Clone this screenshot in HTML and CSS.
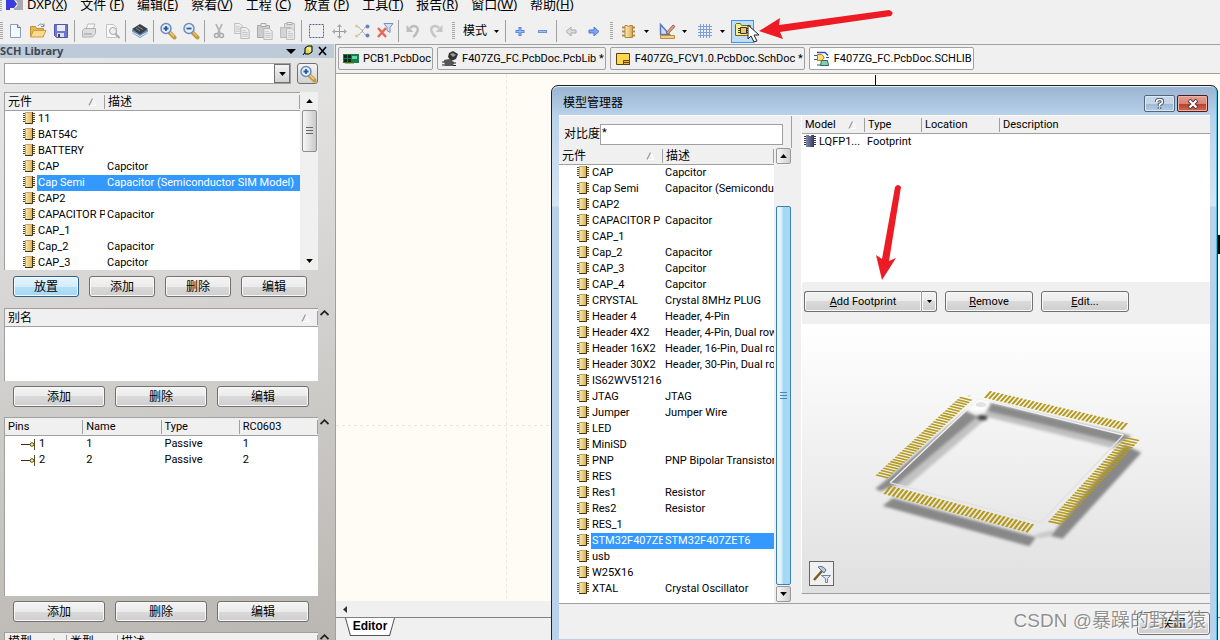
FILE: index.html
```html
<!DOCTYPE html>
<html lang="zh-CN">
<head>
    <meta charset="UTF-8">
    <meta name="viewport" content="width=device-width, initial-scale=1.0">
    <title>SCH Library</title>
    <link rel="stylesheet" href="styles.css">
</head>
<body>
    <!-- Shared icons -->
    <svg class="defs" width="0" height="0">
        <defs>
            <linearGradient id="gold" x1="0" x2="1"><stop offset="0" stop-color="#fdeeb4"/><stop offset="1" stop-color="#d9a84a"/></linearGradient>
            <linearGradient id="navy" x1="0" x2="1"><stop offset="0" stop-color="#8288ae"/><stop offset="1" stop-color="#353a5c"/></linearGradient>
        </defs>
        <symbol id="chip" viewBox="0 0 12 14">
            <path d="M0 2.500h12M0 4.500h12M0 6.500h12M0 8.500h12M0 10.500h12" stroke="#5a4a22"/>
            <rect x="2" y="1" width="8" height="12" fill="url(#gold)"/>
            <path d="M2.500 13V1.500h7" fill="none" stroke="#c8a866"/>
            <path d="M2 12.500h7.500V1" fill="none" stroke="#463412"/>
        </symbol>
        <symbol id="chip-blue" viewBox="0 0 12 14">
            <path d="M0 2.500h12M0 4.500h12M0 6.500h12M0 8.500h12M0 10.500h12" stroke="#2c3148"/>
            <rect x="2" y="1" width="8" height="12" fill="url(#navy)"/>
            <path d="M5 1h2v1H5z" fill="#fff"/>
        </symbol>
        <symbol id="sort" viewBox="0 0 9 8">
            <path d="M4.500 .5L8 7.500H1" stroke="#fff" fill="none"/>
            <path d="M1 7.500L4.500 .5" stroke="#999" fill="none" stroke-width="1.200"/>
        </symbol>
        <symbol id="caret" viewBox="0 0 9 6">
            <path d="M.5 5L4.500 1.200L8.500 5" stroke="#222" stroke-width="1.800" fill="none"/>
        </symbol>
        <symbol id="pin" viewBox="0 0 14 12">
            <path d="M0 6.500h9" stroke="#3c2c18"/><path d="M13.500 1v11" stroke="#5a4a30"/>
            <circle cx="11" cy="6.500" r="1.800" fill="#f6ee84" stroke="#5c4a10"/>
        </symbol>
        <symbol id="down" viewBox="0 0 5 3"><path d="M0 0h5L2.500 3z" fill="#000"/></symbol>
        <symbol id="zoom-in" viewBox="0 0 18 18">
            <path d="M10.500 10.500l5 5" stroke="#c99a3c" stroke-width="4" stroke-linecap="round"/>
            <path d="M10.500 9.800l4.500 4.500" stroke="#f5dc8c" stroke-width="1.200"/>
            <circle cx="7" cy="6.500" r="5" fill="#e3f0fc" stroke="#6d8cb8" stroke-width="1.500"/>
            <path d="M4.500 6.500h5M7 4v5" stroke="#2857a8" stroke-width="1.800"/>
        </symbol>
        <symbol id="page" viewBox="0 0 10 13">
            <path d="M.5.5h6l3 3v9h-9z" fill="#eee" stroke="#b4b4b4"/><path d="M2 4h4M2 6h6M2 8h6M2 10h6" stroke="#c4c4c4"/>
        </symbol>
    </svg>

    <div class="app">
        <nav class="menubar">
            <span class="grip"></span>
            <svg class="logo" width="17" height="14" viewBox="0 0 17 14"><path d="M0 0h8l3 4-3 4H4v2H0z" fill="#3c3cdc"/><path d="M9 0h8v10H8V8c4 0 5-6 1-8z" fill="#a8a8b0"/></svg>
            <a href="#">DXP(<u>X</u>)</a>
            <a href="#">文件 (<u>F</u>)</a>
            <a href="#">编辑(<u>E</u>)</a>
            <a href="#">察看(<u>V</u>)</a>
            <a href="#">工程 (<u>C</u>)</a>
            <a href="#">放置 (<u>P</u>)</a>
            <a href="#">工具(<u>T</u>)</a>
            <a href="#">报告(<u>R</u>)</a>
            <a href="#">窗口(<u>W</u>)</a>
            <a href="#">帮助(<u>H</u>)</a>
        </nav>

        <div class="toolbar">
            <span class="grip"></span>
            <button class="tool" aria-label="New"><svg width="18" height="18" viewBox="0 0 18 18"><path d="M4.500 2.500h7l3 3v10h-10z" fill="#f4f8ff" stroke="#8c9cbc"/><path d="M11.500 2.500v3h3" fill="#cddcf4" stroke="#6478a4"/></svg></button>
            <button class="tool" aria-label="Open"><svg width="18" height="18" viewBox="0 0 18 18"><path d="M1.500 14.500v-10h5l1 2h7v8z" fill="#e9b84c" stroke="#c0903c"/><path d="M1.500 15l3-6.500h12.500l-3 6.500z" fill="#fbdc8c" stroke="#c89a44"/><path d="M9 4c2-3 5-2 6 0m0-2.500v3h-3" fill="none" stroke="#7488ac"/></svg></button>
            <button class="tool" aria-label="Save"><svg width="18" height="18" viewBox="0 0 18 18"><path d="M2.500 2.500h13v13h-11l-2-2z" fill="#7078cc" stroke="#5058a8"/><path d="M5 3h8v6H5z" fill="#e8ecfa"/><path d="M5 11h7v4H5z" fill="#dde"/><path d="M6 12h2v3H6z" fill="#445"/></svg></button>
            <span class="sep"></span>
            <button class="tool" aria-label="Print"><svg width="18" height="18" viewBox="0 0 18 18"><path d="M6 7l2-5h7l-2 5z" fill="#f6f6f6" stroke="#bbb"/><path d="M2.500 8.500l2-2h11v5l-3 3.500h-10z" fill="#ddd" stroke="#b0b0b0"/><path d="M4 12h8" stroke="#999"/></svg></button>
            <button class="tool" aria-label="Preview"><svg width="18" height="18" viewBox="0 0 18 18"><path d="M3.500 2.500h7l3 3v10h-10z" fill="#f8f8f8" stroke="#c4c4c4"/><circle cx="10" cy="9" r="3.500" fill="#eee" stroke="#aaa"/><path d="M12.500 12l4 4" stroke="#aaa" stroke-width="2"/></svg></button>
            <span class="sep"></span>
            <button class="tool" aria-label="Layers"><svg width="18" height="18" viewBox="0 0 18 18"><path d="M1 11l8 5 8-5V8H1z" fill="#6f93b8"/><path d="M1 10l8 4.500 8-4.500" stroke="#e6f0fa" fill="none"/><path d="M1 7l8-5 8 5-8 5.500z" fill="#3c4148"/><path d="M5 6l4 3M7 4.500l5 3" stroke="#8a929c"/></svg></button>
            <span class="sep"></span>
            <button class="tool" aria-label="Zoom in"><svg width="18" height="18"><use href="#zoom-in"/></svg></button>
            <button class="tool" aria-label="Zoom out"><svg width="18" height="18" viewBox="0 0 18 18"><path d="M10.500 10.500l5 5" stroke="#c99a3c" stroke-width="4" stroke-linecap="round"/><path d="M10.500 9.800l4.500 4.500" stroke="#f5dc8c"/><circle cx="7" cy="6.500" r="5" fill="#e3f0fc" stroke="#6d8cb8" stroke-width="1.500"/><path d="M4.500 6.500h5" stroke="#2857a8" stroke-width="1.800"/></svg></button>
            <span class="sep"></span>
            <button class="tool" aria-label="Cut"><svg width="18" height="18" viewBox="0 0 18 18"><path d="M6 2l4.500 10M12 2L7.500 12" stroke="#b4b4b4" stroke-width="1.800"/><circle cx="6.500" cy="13.500" r="2" fill="none" stroke="#aaa" stroke-width="1.500"/><circle cx="11.500" cy="13.500" r="2" fill="none" stroke="#aaa" stroke-width="1.500"/></svg></button>
            <button class="tool" aria-label="Copy"><svg width="18" height="18"><use href="#page" x="1" y="1" width="9" height="11"/><use href="#page" x="7" y="5" width="10" height="12"/></svg></button>
            <button class="tool" aria-label="Paste"><svg width="18" height="18"><path d="M1.500 3.500h12v12h-12z" fill="#ccc" stroke="#aaa"/><path d="M5 1.500h5v3H5z" fill="#eee" stroke="#aaa"/><use href="#page" x="7" y="6" width="10" height="12"/></svg></button>
            <button class="tool" aria-label="Paste array"><svg width="18" height="18"><path d="M5.500 1.500h10v11h-10z" fill="#ddd" stroke="#bbb"/><path d="M1.500 5.500h10v10h-10z" fill="#d4d4d4" stroke="#bbb"/><path d="M8 .5h5v2H8z" fill="#eee" stroke="#aaa"/><use href="#page" x="7" y="6" width="9" height="12"/></svg></button>
            <span class="sep"></span>
            <button class="tool" aria-label="Select area"><svg width="18" height="18"><path d="M2.500 2.500h14v13h-14z" fill="none" stroke="#50649a" stroke-dasharray="2 1"/></svg></button>
            <button class="tool" aria-label="Move"><svg width="18" height="18"><path d="M9.500 3v12M3 9.500h13" stroke="#999" /><path d="M7 5l2.500-3L12 5zM7 14l2.500 3 2.500-3zM5 7L2 9.500 5 12zM14 7l3 2.500-3 2.500z" fill="#aaa"/></svg></button>
            <button class="tool" aria-label="Deselect"><svg width="18" height="18"><path d="M5 5c3 0 5 8 9 8M5 13c3 0 5-8 9-8" stroke="#999" fill="none" stroke-dasharray="2 1"/><circle cx="3.500" cy="4" r="1.500" fill="#e0d060"/><circle cx="3.500" cy="14" r="1.500" fill="#e0d060"/><circle cx="14.500" cy="4.500" r="2" fill="#6884b8"/><circle cx="14.500" cy="13.500" r="2" fill="#6884b8"/></svg></button>
            <button class="tool" aria-label="Clear filter"><svg width="18" height="18"><path d="M8 1.500h9l-3 4v5l-3-2V5.500z" fill="#cfe0f2" stroke="#7890b4"/><path d="M2 6l8 9M10 6l-8 9" stroke="#e86858" stroke-width="2.500"/></svg></button>
            <span class="sep"></span>
            <button class="tool" aria-label="Undo"><svg width="18" height="18"><path d="M6 6c4-4 10-1 7 4q-1 3-4 5" stroke="#bdbdbd" stroke-width="2.500" fill="none"/><path d="M2.500 3v7h7z" fill="#bdbdbd"/></svg></button>
            <button class="tool" aria-label="Redo"><svg width="18" height="18"><path d="M12 6c-4-4-10-1-7 4q1 3 4 5" stroke="#c6c6c6" stroke-width="2.500" fill="none"/><path d="M15.500 3v7h-7z" fill="#c6c6c6"/></svg></button>
            <span class="grip mid"></span>
            <button class="mode">模式<svg width="5" height="3"><use href="#down"/></svg></button>
            <span class="sep"></span>
            <button class="tool" aria-label="Add"><svg width="18" height="18"><path d="M9 5v9M4.500 9.500h9" stroke="#5a84dc" stroke-width="3"/><path d="M9 6v7M5.500 9.500h7" stroke="#9cbcf8"/></svg></button>
            <button class="tool" aria-label="Subtract"><svg width="18" height="18"><path d="M4 9.500h9" stroke="#6c90e0" stroke-width="3"/><path d="M5 9.500h7" stroke="#a4c0f8"/></svg></button>
            <span class="sep"></span>
            <button class="tool" aria-label="Previous"><svg width="18" height="18"><path d="M4 9.500l5-4.500v3h5v3H9v3z" fill="#ddd" stroke="#aaa"/></svg></button>
            <button class="tool" aria-label="Next"><svg width="18" height="18"><path d="M14 9.500L9 5v3H4v3h5v3z" fill="#7ca4f4" stroke="#5478d0"/></svg></button>
            <span class="grip mid"></span>
            <button class="tool" aria-label="Part"><svg width="18" height="18"><path d="M2 5.500h13M2 9.500h13M2 13.500h13" stroke="#b08c50" stroke-width="2"/><path d="M5 3.500h2q1.500 2 3 0h2.500v12H5z" fill="url(#gold)" stroke="#b08440"/></svg></button>
            <button class="drop" aria-label="Part options"><svg width="5" height="3"><use href="#down"/></svg></button>
            <button class="tool" aria-label="Drawing tools"><svg width="18" height="18"><path d="M2.500 2.500v10h9z" fill="#cfe0fa" stroke="#5878c0" stroke-width="1.500"/><path d="M8 11l7-8 2 1.500L10 12z" fill="#d8a090" stroke="#a06050"/><path d="M2.500 13.500h14v3h-14z" fill="#f2cf78" stroke="#b8903c"/></svg></button>
            <button class="drop" aria-label="Drawing options"><svg width="5" height="3"><use href="#down"/></svg></button>
            <button class="tool" aria-label="Grid"><svg width="18" height="18"><path d="M2 4.500h14M2 7.500h14M2 10.500h14M2 13.500h14M4.500 2v14M7.500 2v14M10.500 2v14M13.500 2v14" stroke="#7e9ed8"/></svg></button>
            <button class="drop" aria-label="Grid options"><svg width="5" height="3"><use href="#down"/></svg></button>
            <button class="tool active" aria-label="Model manager"><svg width="18" height="18"><path d="M1.500 13.500v-11l1-1h4l1 2h9v10z" fill="#f6f088" stroke="#6c6820"/><path d="M4 6.500h11M4 8.500h11M4 10.500h11" stroke="#333"/><path d="M6.500 5.500h6v6h-6z" fill="#e6c47c" stroke="#432"/></svg></button>
        </div>

        <div class="workspace">
            <aside class="panel">
                <div class="panel-title">
                    <h2>SCH Library</h2>
                    <svg width="42" height="12" viewBox="0 0 42 12"><path d="M0 4h10L5 9z" fill="#000"/><path d="M17 10l3-4" stroke="#000"/><path d="M19 3l3-2h4v6l-3 2h-4z" fill="#e4d850" stroke="#000"/><path d="M21 3h3v3" stroke="#fff" fill="none"/><path d="M33 2l7 8M40 2l-7 8" stroke="#000" stroke-width="1.600"/></svg>
                </div>
                <div class="panel-body">
                    <div class="search">
                        <div class="combo">
                            <input type="text" aria-label="Component filter">
                            <button aria-label="Open list"><svg width="7" height="4"><use href="#down"/></svg></button>
                        </div>
                        <button class="find" aria-label="Find"><svg width="18" height="18"><use href="#zoom-in"/></svg></button>
                    </div>

                    <div class="section">
                        <div class="list parts">
                            <div class="rows">
                                <table>
                                    <colgroup><col class="col-name"><col></colgroup>
                                    <thead><tr><th>元件<svg class="sort"><use href="#sort"/></svg></th><th>描述</th></tr></thead>
                                    <tbody>
                                        <tr><td><svg class="chip"><use href="#chip"/></svg>11</td><td></td></tr>
                                        <tr><td><svg class="chip"><use href="#chip"/></svg>BAT54C</td><td></td></tr>
                                        <tr><td><svg class="chip"><use href="#chip"/></svg>BATTERY</td><td></td></tr>
                                        <tr><td><svg class="chip"><use href="#chip"/></svg>CAP</td><td>Capcitor</td></tr>
                                        <tr class="selected"><td><svg class="chip"><use href="#chip"/></svg>Cap Semi</td><td>Capacitor (Semiconductor SIM Model)</td></tr>
                                        <tr><td><svg class="chip"><use href="#chip"/></svg>CAP2</td><td></td></tr>
                                        <tr><td><svg class="chip"><use href="#chip"/></svg>CAPACITOR P</td><td>Capacitor</td></tr>
                                        <tr><td><svg class="chip"><use href="#chip"/></svg>CAP_1</td><td></td></tr>
                                        <tr><td><svg class="chip"><use href="#chip"/></svg>Cap_2</td><td>Capacitor</td></tr>
                                        <tr><td><svg class="chip"><use href="#chip"/></svg>CAP_3</td><td>Capcitor</td></tr>
                                    </tbody>
                                </table>
                            </div>
                            <div class="scroll">
                                <button aria-label="Up"><svg class="flip" width="7" height="4"><use href="#down"/></svg></button>
                                <div class="thumb"></div>
                                <button class="end" aria-label="Down"><svg width="7" height="4"><use href="#down"/></svg></button>
                            </div>
                        </div>
                        <div class="side"></div>
                    </div>
                    <div class="actions four">
                        <button class="btn primary">放置</button>
                        <button class="btn">添加</button>
                        <button class="btn">删除</button>
                        <button class="btn">编辑</button>
                    </div>

                    <div class="section">
                        <div class="list alias">
                            <div class="rows">
                                <table><thead><tr><th>别名<svg class="sort"><use href="#sort"/></svg></th></tr></thead></table>
                            </div>
                        </div>
                        <div class="side"><svg width="9" height="6"><use href="#caret"/></svg></div>
                    </div>
                    <div class="actions">
                        <button class="btn">添加</button>
                        <button class="btn">删除</button>
                        <button class="btn">编辑</button>
                    </div>

                    <div class="section">
                        <div class="list pins">
                            <div class="rows">
                                <table>
                                    <thead><tr><th>Pins</th><th>Name</th><th>Type</th><th>RC0603</th></tr></thead>
                                    <tbody>
                                        <tr><td><svg class="pin"><use href="#pin"/></svg>1</td><td>1</td><td>Passive</td><td>1</td></tr>
                                        <tr><td><svg class="pin"><use href="#pin"/></svg>2</td><td>2</td><td>Passive</td><td>2</td></tr>
                                    </tbody>
                                </table>
                            </div>
                        </div>
                        <div class="side"><svg width="9" height="6"><use href="#caret"/></svg></div>
                    </div>
                    <div class="actions last">
                        <button class="btn">添加</button>
                        <button class="btn">删除</button>
                        <button class="btn">编辑</button>
                    </div>

                    <div class="section">
                        <div class="list models">
                            <div class="rows">
                                <table>
                                    <colgroup><col class="col-model"><col class="col-kind"><col></colgroup>
                                    <thead><tr><th>模型<svg class="sort"><use href="#sort"/></svg></th><th>类型</th><th>描述</th></tr></thead>
                                </table>
                            </div>
                        </div>
                        <div class="side"><svg width="9" height="6"><use href="#caret"/></svg></div>
                    </div>
                </div>
            </aside>

            <main class="main">
                <div class="tabs">
                    <a href="#" class="tab"><svg width="16" height="16"><path d="M0 3h16v9H0z" fill="#1d7a4c"/><path d="M1 4h3v3H1zM5 4h3v3H5zM1 8h3v3H1zM5 8h3v3H5z" fill="#0b2c1c"/><path d="M9 5h5v3H9z" fill="#62d8a0"/><path d="M2 12.500h9" stroke="#d4b440"/></svg>PCB1.PcbDoc</a>
                    <a href="#" class="tab"><svg width="16" height="16"><path d="M7 2l4-2 5 3-2 5-5 2-3-4z" fill="#333"/><path d="M8 3l3-1 3 2-3 2z" fill="#999"/><path d="M2 9l5-1 5 3-1 4H3z" fill="#555"/><path d="M0 11h3M0 14h3M11 12h3M11 14.500h3" stroke="#222"/></svg>F407ZG_FC.PcbDoc.PcbLib *</a>
                    <a href="#" class="tab"><svg width="16" height="16"><path d="M1.500 2.500h13v11h-13z" fill="#fbd84c" stroke="#5c4210"/><path d="M8.500 9.500h6v4h-6zM8.500 11.500h6" fill="#f4b838" stroke="#5c4210"/></svg>F407ZG_FCV1.0.PcbDoc.SchDoc *</a>
                    <a href="#" class="tab current"><svg width="16" height="16"><path d="M3 1.500h8l3 3" stroke="#2c50b0" fill="none" stroke-width="1.500"/><path d="M0 4.500h3M0 8.500h3M12 6.500h3M3 14h12" stroke="#2c50b0"/><path d="M3.500 3.500h4q5 3 0 6h-4z" fill="#fce46c" stroke="#c86c20"/><path d="M6.500 14.500l1-5h6l1 5z" fill="#8cccb4" stroke="#2c6c60"/></svg>F407ZG_FC.PcbDoc.SCHLIB</a>
                </div>
                <div class="canvas"></div>
                <div class="hscroll"><svg width="4" height="7" viewBox="0 0 4 7"><path d="M4 0v7L0 3.500z" fill="#333"/></svg></div>
                <div class="footer">
                    <a href="#" class="view-tab">Editor</a>
                </div>
            </main>
        </div>

        <section class="dialog">
            <header class="titlebar">
                <h1>模型管理器</h1>
                <button class="win help" aria-label="Help"><svg width="11" height="12" viewBox="0 0 11 12"><path d="M2.500 4q0-2.500 3-2.500t3 2.200q0 1.600-3 2.800v1.500M5.500 9v2" stroke="#444c5c" stroke-width="3.400" fill="none"/><path d="M2.500 4q0-2.500 3-2.500t3 2.200q0 1.600-3 2.800v1.500M5.500 9.300v1.500" stroke="#fff" stroke-width="1.600" fill="none"/></svg></button>
                <button class="win close" aria-label="Close"><svg width="12" height="10" viewBox="0 0 12 10"><path d="M2 1l8 8M10 1L2 9" stroke="#4c3038" stroke-width="4"/><path d="M2.500 1.500l7 7M9.500 1.500l-7 7" stroke="#fff" stroke-width="2.200"/></svg></button>
            </header>
            <div class="dialog-body">
                <div class="columns">
                    <div class="library">
                        <div class="filter">
                            <label for="mask">对比度</label><input type="text" id="mask" value="*">
                        </div>
                        <div class="list all">
                            <div class="rows">
                                <table>
                                    <colgroup><col class="col-name"><col></colgroup>
                                    <thead><tr><th>元件<svg class="sort"><use href="#sort"/></svg></th><th>描述</th></tr></thead>
                                    <tbody>
                                        <tr><td><svg class="chip"><use href="#chip"/></svg>CAP</td><td>Capcitor</td></tr>
                                        <tr><td><svg class="chip"><use href="#chip"/></svg>Cap Semi</td><td>Capacitor (Semiconductor SIM Model)</td></tr>
                                        <tr><td><svg class="chip"><use href="#chip"/></svg>CAP2</td><td></td></tr>
                                        <tr><td><svg class="chip"><use href="#chip"/></svg>CAPACITOR P</td><td>Capacitor</td></tr>
                                        <tr><td><svg class="chip"><use href="#chip"/></svg>CAP_1</td><td></td></tr>
                                        <tr><td><svg class="chip"><use href="#chip"/></svg>Cap_2</td><td>Capacitor</td></tr>
                                        <tr><td><svg class="chip"><use href="#chip"/></svg>CAP_3</td><td>Capcitor</td></tr>
                                        <tr><td><svg class="chip"><use href="#chip"/></svg>CAP_4</td><td>Capcitor</td></tr>
                                        <tr><td><svg class="chip"><use href="#chip"/></svg>CRYSTAL</td><td>Crystal 8MHz PLUG</td></tr>
                                        <tr><td><svg class="chip"><use href="#chip"/></svg>Header 4</td><td>Header, 4-Pin</td></tr>
                                        <tr><td><svg class="chip"><use href="#chip"/></svg>Header 4X2</td><td>Header, 4-Pin, Dual row</td></tr>
                                        <tr><td><svg class="chip"><use href="#chip"/></svg>Header 16X2</td><td>Header, 16-Pin, Dual row</td></tr>
                                        <tr><td><svg class="chip"><use href="#chip"/></svg>Header 30X2</td><td>Header, 30-Pin, Dual row</td></tr>
                                        <tr><td><svg class="chip"><use href="#chip"/></svg>IS62WV51216</td><td></td></tr>
                                        <tr><td><svg class="chip"><use href="#chip"/></svg>JTAG</td><td>JTAG</td></tr>
                                        <tr><td><svg class="chip"><use href="#chip"/></svg>Jumper</td><td>Jumper Wire</td></tr>
                                        <tr><td><svg class="chip"><use href="#chip"/></svg>LED</td><td></td></tr>
                                        <tr><td><svg class="chip"><use href="#chip"/></svg>MiniSD</td><td></td></tr>
                                        <tr><td><svg class="chip"><use href="#chip"/></svg>PNP</td><td>PNP Bipolar Transistor</td></tr>
                                        <tr><td><svg class="chip"><use href="#chip"/></svg>RES</td><td></td></tr>
                                        <tr><td><svg class="chip"><use href="#chip"/></svg>Res1</td><td>Resistor</td></tr>
                                        <tr><td><svg class="chip"><use href="#chip"/></svg>Res2</td><td>Resistor</td></tr>
                                        <tr><td><svg class="chip"><use href="#chip"/></svg>RES_1</td><td></td></tr>
                                        <tr class="selected focus"><td><svg class="chip"><use href="#chip"/></svg>STM32F407ZET6</td><td>STM32F407ZET6</td></tr>
                                        <tr><td><svg class="chip"><use href="#chip"/></svg>usb</td><td></td></tr>
                                        <tr><td><svg class="chip"><use href="#chip"/></svg>W25X16</td><td></td></tr>
                                        <tr><td><svg class="chip"><use href="#chip"/></svg>XTAL</td><td>Crystal Oscillator</td></tr>
                                    </tbody>
                                </table>
                            </div>
                            <div class="scroll">
                                <button class="raised" aria-label="Up"><svg class="flip" width="7" height="4"><use href="#down"/></svg></button>
                                <div class="thumb hot"></div>
                                <button class="raised end" aria-label="Down"><svg width="7" height="4"><use href="#down"/></svg></button>
                            </div>
                        </div>
                    </div>

                    <div class="detail">
                        <div class="footprints">
                            <table>
                                <colgroup><col class="col-fp"><col class="col-type"><col class="col-loc"><col></colgroup>
                                <thead><tr><th>Model<svg class="sort"><use href="#sort"/></svg></th><th>Type</th><th>Location</th><th>Description</th></tr></thead>
                                <tbody><tr><td><svg class="chip"><use href="#chip-blue"/></svg>LQFP1...</td><td>Footprint</td><td></td><td></td></tr></tbody>
                            </table>
                        </div>
                        <div class="footprint-actions">
                            <div class="split">
                                <button class="btn"><span><u>A</u>dd Footprint</span></button>
                                <button class="btn more" aria-label="More"><svg width="5" height="3"><use href="#down"/></svg></button>
                            </div>
                            <button class="btn"><u>R</u>emove</button>
                            <button class="btn"><u>E</u>dit...</button>
                        </div>
                        <div class="preview">
                            <!-- 3D view of the package, 36 pads per side -->
                            <svg class="package" width="300" height="190" viewBox="0 0 900 570">
                                <defs><filter id="soft"><feGaussianBlur stdDeviation="5"/></filter></defs>
                                <g filter="url(#soft)">
                                    <path d="M345 135L385 140L140 350L80 345z" fill="#c2c2c2"/>
                                    <path d="M318 122L352 140L112 342L62 364L46 356L90 320z" fill="#8a8a8a"/>
                                    <path d="M385 112L790 205L765 236L370 138z" fill="#c0c0c0"/>
                                    <path d="M392 98L815 198L775 218L384 124z" fill="#8a8a8a"/>
                                    <path d="M795 225L844 248L608 506L572 498L650 400z" fill="#888"/>
                                    <path d="M98 384L528 502L508 529L68 408z" fill="#888"/>
                                    <path d="M520 495L580 480L572 498L540 505z" fill="#c8c8c8"/>
                                    <ellipse cx="367" cy="143" rx="16" ry="9" fill="#444"/>
                                    <path d="M345 92h45l-15 28h-45z" fill="#fff"/>
                                </g>
                                <ellipse cx="363" cy="104" rx="16" ry="8" fill="#e2e2e2"/>
                                <path d="M323 78h9" stroke="#ddd" stroke-width="5"/>
                                <path d="M90 338L355 86L790 195" fill="none" stroke="#f2f2f4" stroke-width="4"/>
                                <path d="M790 195L542 458L90 338" fill="none" stroke="#e2e2e4" stroke-width="4"/>
                                <g stroke="#b59a1c" stroke-dasharray="2.300 1.700">
                                    <path d="M0 .5H142.300" transform="matrix(2.910 .680 -18 20 390 63)"/>
                                    <path d="M0 .5H142.300" transform="matrix(-1.790 1.660 36 9 301 80)"/>
                                    <path d="M0 .5H142.300" transform="matrix(3.040 .815 -20 25 90 347)"/>
                                    <path d="M0 .5H142.300" transform="matrix(-1.640 1.790 42 9 797 201)"/>
                                </g>
                            </svg>
                            <button class="config" aria-label="View options"><svg width="20" height="20"><path d="M2 16L10 7" stroke="#7c5a28" stroke-width="2.500"/><path d="M6 3q5-2 8 3l-2 3-3-3z" fill="#b8cce0" stroke="#5c7088"/><path d="M9.500 11.500h9l-3 3v4h-2v-4z" fill="#dceaf8" stroke="#6c84a4"/></svg></button>
                        </div>
                    </div>
                </div>
                <div class="dialog-footer">
                    <button class="btn">关闭</button>
                </div>
            </div>
        </section>

        <!-- Annotations -->
        <svg class="pointer" width="13" height="19" viewBox="0 0 13 19"><path d="M1 1v14l3-3 3 6 3-1-3-6h5z" fill="#fff" stroke="#222"/></svg>
        <svg class="arrow arrow-top" width="136" height="32" viewBox="0 0 136 32"><path d="M1 22L22 9L21 16L131 1Q137 3 133 7L22 23L25 30z" fill="#ed1c24"/></svg>
        <svg class="arrow arrow-add" width="28" height="98" viewBox="0 0 28 98"><path d="M7 97L1 72L7 76L20 4Q23 0 26 4L14 78L21 75z" fill="#ed1c24"/></svg>
        <div class="watermark">CSDN @暴躁的野生猿</div>
    </div>
</body>
</html>
```

FILE: styles.css
```css
* {
    box-sizing: border-box;
}

body {
    margin: 0;
    font-family: Roboto, "Noto Sans CJK SC", sans-serif;
    font-size: 11px;
    line-height: 16px;
    color: #000;
}

h1,
h2 {
    margin: 0;
    font-size: 12px;
}

a {
    color: inherit;
    text-decoration: none;
}

button,
input {
    font: inherit;
    color: inherit;
    margin: 0;
    padding: 0;
}

svg {
    flex: none;
}

.defs {
    position: absolute;
}

.app {
    position: relative;
    display: flex;
    flex-direction: column;
    height: 100vh;
    overflow: hidden;
    background-color: #f0f0f0;
}

/* Menu and toolbar */
.menubar {
    display: flex;
    height: 18px;
    overflow: hidden;
    font-family: "Noto Sans", "Noto Sans CJK SC", sans-serif;
    font-size: 13px;
}

.menubar a {
    margin: -5px 13px 0 0;
    line-height: 18px;
    white-space: nowrap;
}

.menubar .logo {
    margin: 0 4px;
}

.grip {
    width: 3px;
    height: 18px;
    background: repeating-linear-gradient(#a8a8a8 0 1px, transparent 1px 2px);
}

.menubar .grip {
    width: 2px;
    height: 12px;
}

.toolbar {
    display: flex;
    align-items: center;
    height: 26px;
}

.grip.mid {
    margin: 0 4px 0 5px;
}

.tool,
.drop,
.mode {
    display: flex;
    align-items: center;
    justify-content: center;
    width: 23px;
    height: 23px;
    border: none;
    background: none;
}

.tool.active {
    border: 1px solid #3399ff;
    background-color: #c2dcf6;
}

.drop {
    width: 15px;
    padding-right: 3px;
}

.mode {
    width: 44px;
    gap: 7px;
    font-size: 12px;
}

.sep {
    width: 1px;
    height: 22px;
    margin: 0 2px;
    background-color: #a0a0a0;
}

.workspace {
    display: flex;
    flex: 1;
    min-height: 0;
}

/* Library panel */
.panel {
    display: flex;
    flex-direction: column;
    flex: none;
    width: 335px;
    overflow: hidden;
    background: linear-gradient(170deg, #eaeaea, #bab7b2);
}

.panel-title {
    display: flex;
    align-items: center;
    justify-content: space-between;
    height: 14px;
    margin-right: 1px;
    padding-right: 6px;
    background-color: #bdcad8;
    color: #3f4650;
}

.panel-title h2 {
    font-family: "Noto Sans", sans-serif;
    font-size: 11px;
    line-height: 14px;
}

.panel-body {
    padding: 5px 0 0 4px;
}

.search {
    display: flex;
    gap: 6px;
    margin: 0 17px 8px 0;
}

.combo {
    display: flex;
    flex: 1;
    height: 21px;
    border: 1px solid #a0a0a0;
    background-color: #fff;
}

.combo input {
    flex: 1;
    min-width: 0;
    border: none;
}

.combo button,
.find {
    display: flex;
    align-items: center;
    justify-content: center;
    width: 16px;
    border: 1px solid #707070;
    background: linear-gradient(#f4f4f4, #d2d2d2);
}

.find {
    width: 21px;
    border-radius: 3px;
}

.section {
    display: flex;
}

.side {
    width: 17px;
    padding-left: 2px;
    line-height: 10px;
}

.list {
    display: flex;
    flex: 1;
    min-width: 0;
    border-left: 1px solid #a0a0a0;
    background-color: #fff;
}

.parts {
    height: 178px;
}

.alias {
    height: 73px;
}

.pins {
    height: 179px;
}

.models {
    height: 60px;
}

.rows {
    flex: 1;
    min-width: 0;
    overflow: hidden;
}

table {
    width: 100%;
    table-layout: fixed;
    border-collapse: separate;
    border-spacing: 0;
}

th,
td {
    height: 16px;
    padding: 0 0 0 2px;
    overflow: hidden;
    white-space: nowrap;
    text-align: left;
    font-weight: normal;
    line-height: 16px;
}

th {
    height: 19px;
    padding-left: 3px;
    border-top: 1px solid #a0a0a0;
    border-bottom: 1px solid #a0a0a0;
    background: linear-gradient(#a0a0a0, #a0a0a0) no-repeat right center / 1px 14px #f0f0f0;
}

.parts th,
.alias th,
.models th,
.all th {
    font-size: 12px;
}

td:first-child {
    padding-left: 18px;
}

.col-name {
    width: 100px;
}

.col-model {
    width: 62px;
}

.col-kind {
    width: 51px;
}

.sort {
    float: right;
    width: 9px;
    height: 8px;
    margin: 4px 8px 0 0;
}

.chip {
    width: 12px;
    height: 14px;
    margin-right: 3px;
    vertical-align: top;
}

.pin {
    width: 14px;
    height: 12px;
    margin: 2px 4px 0 0;
    vertical-align: top;
}

.pins td:first-child {
    padding-left: 16px;
}

.pins th,
.pins td {
    padding-left: 3px;
}

.selected td {
    background-color: #3399ff;
    color: #fff;
}

.selected td:first-child {
    background: linear-gradient(to right, #fff 32px, #3399ff 32px);
}

.focus td:last-child {
    outline: 1px dotted #c87a30;
    outline-offset: -1px;
}

.scroll {
    display: flex;
    flex-direction: column;
    align-items: center;
    width: 18px;
    padding: 1px;
    background-color: #f0f0f0;
}

.scroll button {
    display: flex;
    align-items: center;
    justify-content: center;
    width: 15px;
    height: 16px;
    border: none;
    background: none;
}

.scroll .raised {
    border: 1px solid #989898;
    border-radius: 2px;
    background: linear-gradient(to right, #f6f6f6, #d0d0d0);
}

.scroll .end {
    margin-top: auto;
}

.flip {
    transform: scaleY(-1);
}

.thumb {
    width: 15px;
    height: 42px;
    margin-top: 1px;
    border: 1px solid #8e8e8e;
    border-radius: 2px;
    background:
        repeating-linear-gradient(#666 0 1px, transparent 1px 3px) no-repeat center / 7px 8px,
        linear-gradient(to right, #f6f6f6, #cacaca);
}

.thumb.hot {
    flex: 1;
    margin: 42px 0 1px;
    border-color: #3c7fb1;
    background:
        repeating-linear-gradient(#4a86b4 0 1px, transparent 1px 3px) no-repeat center / 7px 8px,
        linear-gradient(to right, #e4f4fc 30%, #a4d8f2 50%, #a8dbf4);
}

.btn {
    height: 21px;
    border: 1px solid #707070;
    border-radius: 3px;
    background: linear-gradient(#f4f4f4, #ebebeb 50%, #dadada 50%, #cecece);
    box-shadow: inset 0 0 0 1px #f8f8f8;
    line-height: 18px;
}

.btn.primary {
    border-color: #2c628b;
    background: linear-gradient(#e6f5fd, #d4edfb 50%, #b4e0f8 50%, #a4d8f4);
}

.actions {
    display: grid;
    grid-template-columns: repeat(3, 1fr);
    gap: 10px;
    padding: 5px 26px 10px 9px;
    font-size: 12px;
}

.actions.four {
    grid-template-columns: repeat(4, 1fr);
    padding: 6px 28px 11px 9px;
}

/* Documents */
.main {
    display: flex;
    flex-direction: column;
    flex: 1;
    min-width: 0;
    border-top: 1px solid #a0a0a0;
    border-left: 1px solid #a0a0a0;
}

.tabs {
    display: flex;
    gap: 4px;
    padding: 2px 2px 3px;
    border-bottom: 1px solid #a0a0a0;
}

.tab {
    display: flex;
    align-items: center;
    gap: 4px;
    height: 23px;
    padding: 0 1px 0 4px;
    border: 1px solid #a0a0a0;
    border-radius: 2px;
    white-space: nowrap;
}

.tab.current {
    background-color: #fff;
}

/* Sheet with its axis mark, grid lines and the edge of a part */
.canvas {
    flex: 1;
    background:
        linear-gradient(#000, #000) no-repeat 539px 1px / 1px 12px,
        linear-gradient(#000, #000) no-repeat right 161px / 2px 19px,
        repeating-linear-gradient(#ece8e0 0 3px, transparent 3px 6px) no-repeat 170px 0 / 1px 100%,
        repeating-linear-gradient(to right, #ece8e0 0 3px, transparent 3px 6px) no-repeat 0 351px / 100% 1px,
        #fffcf5;
}

.hscroll {
    display: flex;
    align-items: center;
    height: 16px;
    padding-left: 7px;
    background-color: #f0f0f0;
}

.footer {
    height: 23px;
    padding-left: 9px;
    border-top: 1px solid #808080;
}

.view-tab {
    display: block;
    position: relative;
    z-index: 0;
    width: 50px;
    height: 18px;
    background-color: #555;
    clip-path: polygon(0 0, 100% 0, 90% 100%, 10% 100%);
    font-family: "Liberation Sans", sans-serif;
    font-size: 12px;
    font-weight: bold;
    text-align: center;
}

.view-tab::before {
    content: "";
    position: absolute;
    inset: 0 1px 1px;
    z-index: -1;
    background-color: #fff;
    clip-path: polygon(0 0, 100% 0, 90% 100%, 10% 100%);
}

/* Model manager window */
.dialog {
    position: absolute;
    top: 85px;
    left: 551px;
    right: 2px;
    bottom: -8px;
    display: flex;
    flex-direction: column;
    padding: 0 7px 8px 7px;
    border: 1px solid #222;
    border-radius: 7px 7px 0 0;
    background: linear-gradient(#9ab4d1, #b9d1ea 30px, #c4d8ee 60px, #d6e4f4 120px, #b9d1ea 121px);
    box-shadow: inset -1px 0 #38c8e8, inset 0 1px #e4eef8;
}

.titlebar {
    display: flex;
    gap: 2px;
    height: 29px;
    padding: 9px 2px 0 4px;
}

.titlebar h1 {
    flex: 1;
    font-weight: normal;
}

.win {
    display: flex;
    align-items: center;
    justify-content: center;
    width: 31px;
    height: 17px;
    border: 1px solid #52667e;
    border-radius: 2px;
    background: linear-gradient(#c4d6ea 50%, #9cb6d2 50%, #b4cce6);
    box-shadow: inset 0 0 0 1px #dce8f4;
}

.win.close {
    border-color: #4c1c20;
    background: linear-gradient(#e6a094, #d88474 50%, #b83c24 50%, #d06c50);
    box-shadow: inset 0 0 0 1px #e8b4a8;
}

.dialog-body {
    display: flex;
    flex-direction: column;
    flex: 1;
    min-height: 0;
    background-color: #f0f0f0;
}

.columns {
    display: flex;
    gap: 9px;
    flex: 1;
    min-height: 0;
    border-top: 1px solid #fff;
    border-bottom: 1px solid #a0a0a0;
}

.library {
    display: flex;
    flex-direction: column;
    flex: none;
    width: 233px;
}

.filter {
    display: flex;
    align-items: center;
    height: 32px;
    padding: 4px 8px 0 5px;
    border-right: 1px solid #a0a0a0;
    font-size: 12px;
}

.filter input {
    flex: 1;
    min-width: 0;
    height: 21px;
    padding: 0 1px 4px;
    border: 1px solid #a0a0a0;
    background-color: #fff;
    font-size: 11px;
}

.all {
    min-height: 0;
    border-left: none;
}

.all th {
    height: 17px;
    border-top: none;
}

.all .col-name {
    width: 104px;
}

.all .scroll {
    padding-top: 0;
}

.detail {
    display: flex;
    flex-direction: column;
    flex: 1;
    min-width: 0;
    margin-bottom: 9px;
    border-left: 1px solid #fff;
    border-bottom: 1px solid #a0a0a0;
}

.footprints {
    height: 166px;
    background-color: #fff;
}

.footprints th {
    height: 18px;
    border-top: none;
}

.footprints th:last-child {
    background-image: none;
}

.footprints td:first-child {
    padding-left: 2px;
}

.col-fp {
    width: 63px;
}

.col-type {
    width: 57px;
}

.col-loc {
    width: 78px;
}

.footprint-actions {
    display: flex;
    gap: 8px;
    padding: 9px 2px 12px;
}

.footprint-actions .btn {
    width: 88px;
}

.split {
    display: flex;
    width: 133px;
}

.footprint-actions .split .btn {
    flex: 1;
    border-right: none;
    border-radius: 3px 0 0 3px;
}

.footprint-actions .split .more {
    display: flex;
    flex: none;
    align-items: center;
    justify-content: center;
    width: 16px;
    border: 1px solid #707070;
    border-left-color: #a0a0a0;
    border-radius: 0 3px 3px 0;
}

.preview {
    display: flex;
    flex-direction: column;
    align-items: center;
    justify-content: space-between;
    flex: 1;
    padding: 46px 0 7px 7px;
    background: linear-gradient(#fff, #e0e0e0);
}

.config {
    display: flex;
    align-items: center;
    justify-content: center;
    align-self: flex-start;
    width: 25px;
    height: 25px;
    border: 1px solid #666;
    background-color: #f0f0f0;
}

.dialog-footer {
    display: flex;
    justify-content: flex-end;
    height: 35px;
    padding-top: 8px;
    font-size: 12px;
}

.dialog-footer .btn {
    width: 73px;
    height: 23px;
}

/* Overlays */
.pointer {
    position: absolute;
    top: 24px;
    left: 747px;
}

.arrow {
    position: absolute;
}

.arrow-top {
    top: 9px;
    left: 758px;
}

.arrow-add {
    top: 183px;
    left: 875px;
}

.watermark {
    position: absolute;
    right: 14px;
    bottom: 5px;
    color: rgba(110, 110, 110, 0.75);
    font-family: "Liberation Sans", "Noto Sans CJK SC", sans-serif;
    font-size: 19px;
    line-height: 28px;
    text-shadow: 1px 1px #fff;
}
```
